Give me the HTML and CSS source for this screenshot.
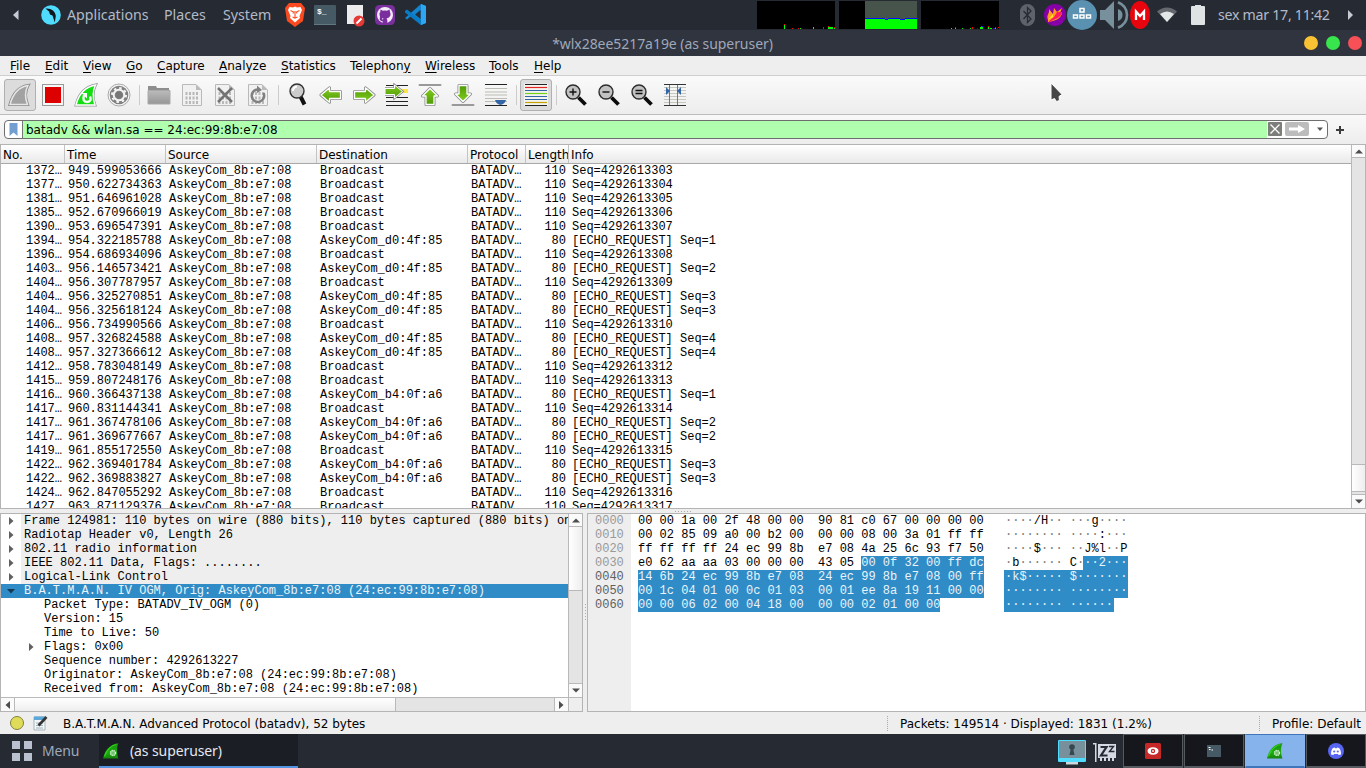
FILE: index.html
```html
<!DOCTYPE html>
<html lang="pt">
<head>
<meta charset="utf-8">
<title>*wlx28ee5217a19e (as superuser)</title>
<link rel="stylesheet" href="styles.css">
</head>
<body>
<svg width="0" height="0" class="defs">
  <defs>
    <linearGradient id="fin" x1="0" y1="0" x2="0" y2="1"><stop offset="0" stop-color="#1c8c10"/><stop offset=".6" stop-color="#1fae12"/><stop offset="1" stop-color="#15820c"/></linearGradient>
    <linearGradient id="grn" x1="0" y1="0" x2="0" y2="1"><stop offset="0" stop-color="#83cc1f"/><stop offset="1" stop-color="#4f9a06"/></linearGradient>
    <linearGradient id="fold" x1="0" y1="0" x2="0" y2="1"><stop offset="0" stop-color="#bbb"/><stop offset="1" stop-color="#969696"/></linearGradient>
    <symbol id="shark" viewBox="0 0 16 16"><path d="M0 15.500C2 7 7 1 15.500 .3C13.500 4 13.500 11 15.500 15.500Z" fill="url(#fin)"/><path d="M1.500 13.500C4 7 8 2.500 13.500 1.500" fill="none" stroke="#2fd21d" stroke-width="1.200"/><circle cx="10" cy="10" r="2.500" fill="#6fc26a" stroke="#e2f8e0" stroke-width="1.300" stroke-dasharray="1.300 .7"/></symbol>
    <symbol id="arrow" viewBox="0 0 24 24"><path d="M2 12L10.500 4.800V8.500H21.500V15.500H10.500V19.200Z" fill="#8b8b8b" stroke="#8b8b8b" stroke-width="3" stroke-linejoin="round"/><path d="M2 12L10.500 4.800V8.500H21.500V15.500H10.500V19.200Z" fill="url(#grn)" stroke="#fff" stroke-width="1.300" stroke-linejoin="round"/></symbol>
    <symbol id="varrow" viewBox="0 0 24 24"><path d="M12 5.500L19.500 13H16V21.500H8V13H4.500Z" fill="#8b8b8b" stroke="#8b8b8b" stroke-width="3" stroke-linejoin="round"/><path d="M12 5.500L19.500 13H16V21.500H8V13H4.500Z" fill="url(#grn)" stroke="#fff" stroke-width="1.300" stroke-linejoin="round"/></symbol>
    <symbol id="page" viewBox="0 0 24 24"><path d="M2.500 1.500H16L21.500 7V22.500H2.500Z" fill="#f1f1f1" stroke="#b9b9b9"/><path d="M16 1.500V7H21.500Z" fill="#bbb"/><path d="M5.500 10.500H19M5.500 15H19M5.500 19.500H19" stroke="#b8b8b8" stroke-width="3" stroke-dasharray="2 1.500"/></symbol>
    <symbol id="lens" viewBox="0 0 24 24"><path d="M14.500 14.500L21.500 21.500" stroke="#0b0b0b" stroke-width="3.800"/><circle cx="9" cy="9" r="7" fill="#c2c2c2" stroke="#2c2c2c" stroke-width="1.400"/></symbol>
  </defs>
</svg>

<header class="panel">
  <svg class="p-tri" width="6" height="10"><path d="M5.500 0V10L0 5Z" fill="#c5cad6"/></svg>
  <svg class="p-logo" width="20" height="20" viewBox="0 0 20 20"><circle cx="10" cy="10" r="9.800" fill="#4fdcff"/><path d="M4.500 3.500C10 3 14.500 6 14.800 11L13.800 17.500L11.500 10.500L9 9.500L8 6.500Z" fill="#10171c"/></svg>
  <span class="p-item p-app">Applications</span>
  <span class="p-item p-places">Places</span>
  <span class="p-item p-sys">System</span>
  <svg class="p-launch" width="142" height="24" viewBox="285 3 142 24">
    <path d="M289 3H301L305 8L303 21L295 27L287 21L285 8Z" fill="#fb4a1f"/><path d="M289.500 7L293 7.500L295 6.500L297 7.500L300.500 7L302 10L299.500 16L300 18L295 22.500L290 18L290.500 16L288 10Z" fill="#fff"/><path d="M290.500 10.500L293.500 12L293 13.500M299.500 10.500L296.500 12L297 13.500M295 11V18M292.500 17L295 18L297.500 17" stroke="#fb542b" stroke-width="1.200" fill="none"/>
    <rect x="314" y="5" width="22" height="20" rx="1" fill="#455a64"/><path d="M314 24.500H336" stroke="#607983"/><text x="317" y="14" class="mono-ico">$_</text>
    <path d="M347 5H363V24H347Z" fill="#ececec"/><circle cx="359" cy="21" r="5.500" fill="#e53935"/><path d="M356.500 23.500L361.500 18.500" stroke="#fff" stroke-width="2"/>
    <rect x="375" y="5" width="20" height="20" rx="4.500" fill="#7b2f9f"/><circle cx="385" cy="15" r="8" fill="#f3eaf7"/><path d="M380.500 9.500L383 10.700Q385 10.200 387 10.700L389.500 9.500L390 12Q391 13.500 390.300 15.800Q389.500 18 386.500 18.500L387.300 20V23.500H382.700V21.300Q380.500 21.500 379.700 19.500M382.700 20L383.500 18.500Q380.500 18 379.700 15.800Q379 13.500 380 12Z" fill="#7b2f9f"/>
    <path d="M421 4L426 6V23L421 25L411 16L407 19.500L405 18L417 7.500Z" fill="#1584cf"/><path d="M405 11L407 9.500L421 20.500V25L405 12.500Z" fill="#087bc4"/><path d="M420.500 10V19L415 14.500Z" fill="#262b33"/><path d="M421 4L426 6V23L421 25Z" fill="#2ea6f2"/>
  </svg>
  <svg class="p-graphs" width="242" height="28" viewBox="757 1 242 28" shape-rendering="crispEdges">
    <path d="M757 1H835V29H757ZM839 1H917V29H839ZM921 1H999V29H921Z" fill="#000"/>
    <path d="M865 1H917V19H865Z" fill="#46544b"/><path d="M865 19H917V29H865Z" fill="#0f0"/><path d="M865 18.500H885M885 19.500H888M888 18.500H900M900 19.500H905M905 18.500H917" stroke="#0010ff"/>
    <path d="M784 25h1v4h-1zM800 28h1v1h-1zM813 27h1v2h-1zM828 27h5v2h-5zM834 28h1v1h-1zM951 28h1v1h-1zM955 28h1v1h-1zM962 28h1v1h-1zM970 28h1v1h-1zM980 27h3v2h-3zM988 27h1v2h-1zM990 28h2v1h-2zM995 27h1v2h-1z" fill="#0f0"/>
    <path d="M784 24h1v1h-1zM792 28h1v1h-1zM798 28h1v1h-1zM823 27h1v2h-1zM828 26h1v1h-1zM834 27h1v1h-1zM955 27h1v1h-1zM972 27h1v2h-1zM981 26h2v1h-2zM988 26h1v1h-1zM995 27h1v1h-1zM998 27h1v1h-1z" fill="#f00"/>
    <path d="M977 28h1v1h-1zM982 26h1v1h-1zM987 28h1v1h-1zM993 28h2v1h-2zM997 28h1v1h-1z" fill="#20f"/>
  </svg>
  <svg class="p-tray" width="190" height="30" viewBox="1018 0 190 30">
    <rect x="1020" y="4" width="15" height="22" rx="7.500" fill="#5d626b"/><path d="M1023.500 11L1031 19L1027.500 22.500V7.500L1031 11L1023.500 19" fill="none" stroke="#272c34" stroke-width="1.300"/>
    <circle cx="1055" cy="15" r="11" fill="#8600a8"/><path d="M1048 20C1046 14 1050 14 1049 9L1053 14L1054 8L1057 12L1062 8L1060 13L1062 12C1062 18 1056 21 1048 22Z" fill="#ff9a1f"/><path d="M1049 21L1054 17L1057 12L1062 12C1061 18 1055 19 1049 22Z" fill="#ff1764"/><path d="M1048 20L1053 14L1053 17Z" fill="#ffe233"/>
    <circle cx="1082" cy="15" r="15" fill="#5a91b1"/><path d="M1080 8.500H1084V12H1080ZM1073.500 15H1077.500V18H1073.500ZM1080 15H1084V18H1080ZM1086.500 15H1090.500V18H1086.500Z" fill="none" stroke="#fff" stroke-width="1.500"/>
    <path d="M1100 10H1105L1114 1V29L1105 20H1100Z" fill="#78909c"/><path d="M1118 2.300Q1127 6 1127 15Q1127 24 1118 27.700" fill="none" stroke="#78909c" stroke-width="2.600"/><path d="M1118 9Q1122.500 10.500 1122.500 15Q1122.500 19.500 1118 21Z" fill="#78909c"/>
    <ellipse cx="1140" cy="15" rx="10" ry="14" fill="#e8050d"/><path d="M1136 20V11.500L1140 16L1144 11.500V20" fill="none" stroke="#fff" stroke-width="2.300"/>
    <path d="M1157 11.500Q1167 3.500 1177 11.500L1167 22Z" fill="#65696f"/><path d="M1160 14Q1167 9 1174 14L1167 22Z" fill="#e4e7e8"/>
    <path d="M1191 7Q1191 6 1192 6H1195V5H1201V6H1204Q1205 6 1205 7V24Q1205 25 1204 25H1192Q1191 25 1191 24Z" fill="#dfe3e4"/>
  </svg>
  <span class="p-item p-clock">sex mar 17, 11:42</span>
  <svg class="p-end" width="5" height="10"><path d="M0 0V10L5 5Z" fill="#c5cad6"/></svg>
</header>

<div class="titlebar">
  <span class="title">*wlx28ee5217a19e (as superuser)</span>
  <div class="lights"><i class="l-min"></i><i class="l-max"></i><i class="l-close"></i></div>
</div>

<nav class="menubar">
  <span class="w35"><u>F</u>ile</span><span class="w38"><u>E</u>dit</span><span class="w43"><u>V</u>iew</span><span class="w31"><u>G</u>o</span><span class="w62"><u>C</u>apture</span><span class="w62"><u>A</u>nalyze</span><span class="w69"><u>S</u>tatistics</span><span class="w75">Telephon<u>y</u></span><span class="w64"><u>W</u>ireless</span><span class="w45"><u>T</u>ools</span><span><u>H</u>elp</span>
</nav>

<div class="toolbar">
  <div class="tb on"><svg width="24" height="24"><path d="M2 21.500C5 10 11 4 20 2.500C17 8 17 15 19.500 21.500Z" fill="#9b9b9b" stroke="#888" stroke-width="3"/><path d="M2 21.500C5 10 11 4 20 2.500C17 8 17 15 19.500 21.500Z" fill="#a2a2a2" stroke="#e6e6e6" stroke-width="1.500"/></svg></div>
  <div class="tb"><svg width="24" height="24"><rect x="1.500" y="1.500" width="21" height="21" fill="#f6f6f6" stroke="#999"/><rect x="4" y="4" width="16" height="16" fill="#dc0000"/></svg></div>
  <div class="tb"><svg width="24" height="24"><path d="M2 22C5 10 11 4 21.500 2C18.500 8 18.500 15 21 22Z" fill="#12de11" stroke="#999" stroke-width="2.800"/><path d="M2 22C5 10 11 4 21.500 2C18.500 8 18.500 15 21 22Z" fill="#12de11" stroke="#fff" stroke-width="1.400"/><path d="M10 12Q8 19 13 19Q18 18.500 16 13.500" fill="none" stroke="#fff" stroke-width="2.400"/><path d="M7.500 10H13V15.500Z" fill="#fff"/></svg></div>
  <div class="tb"><svg width="24" height="24"><circle cx="12" cy="12" r="11" fill="#f5f5f5" stroke="#aaa"/><circle cx="12" cy="12" r="9.300" fill="#808080"/><circle cx="12" cy="12" r="5.300" fill="none" stroke="#f3f3f3" stroke-width="2"/><circle cx="12" cy="12" r="7" fill="none" stroke="#f3f3f3" stroke-width="2" stroke-dasharray="2.500 3"/><circle cx="12" cy="12" r="3.300" fill="#777"/></svg></div>
  <i class="sep"></i>
  <div class="tb"><svg width="24" height="24"><path d="M1 3H9L10 5H22V8H1Z" fill="#8e8e8e"/><path d="M1 7.500H23V21H1Z" fill="url(#fold)" stroke="#aaa"/></svg></div>
  <div class="tb"><svg width="24" height="24"><use href="#page"/></svg></div>
  <div class="tb"><svg width="24" height="24"><use href="#page"/><path d="M5 5L19 19M19 5L5 19" stroke="#737373" stroke-width="2.500"/></svg></div>
  <div class="tb"><svg width="24" height="24"><use href="#page"/><path d="M17.500 10A6.200 6.200 0 1 1 12 6.500" fill="none" stroke="#808080" stroke-width="2.500"/><path d="M11 2.500L16 7L11 10Z" fill="#808080"/></svg></div>
  <i class="sep"></i>
  <div class="tb"><svg width="24" height="24"><path d="M14.500 13.500L18.500 21.500" stroke="#111" stroke-width="4"/><circle cx="11" cy="8" r="7" fill="#ccc" stroke="#333" stroke-width="1.400"/><path d="M7 8Q7 4 11 3.500" stroke="#fff" stroke-width="2" fill="none"/></svg></div>
  <div class="tb"><svg width="24" height="24"><use href="#arrow"/></svg></div>
  <div class="tb"><svg width="24" height="24"><use href="#arrow" transform="rotate(180 12 12)"/></svg></div>
  <div class="tb"><svg width="24" height="24"><path d="M1 2.500H23M1 14.500H23M1 18.500H23M1 22.500H23" stroke="#222" stroke-width="1.200"/><path d="M15 6H23V10H15Z" fill="#ffe34b"/><path d="M0 5.500H9.500V2L17.500 8.500L9.500 15V11.500H0Z" fill="#8b8b8b" stroke="#8b8b8b" stroke-width="2.400"/><path d="M0 5.500H9.500V2L17.500 8.500L9.500 15V11.500H0Z" fill="url(#grn)" stroke="#fff" stroke-width="1"/></svg></div>
  <div class="tb"><svg width="24" height="24"><path d="M1.500 2H22.500" stroke="#999" stroke-width="2" stroke-linecap="round"/><use href="#varrow"/></svg></div>
  <div class="tb"><svg width="24" height="24"><path d="M1.500 22H22.500" stroke="#999" stroke-width="2" stroke-linecap="round"/><use href="#varrow" transform="rotate(180 12 12)"/></svg></div>
  <div class="tb"><svg width="24" height="24"><path d="M1 5.500H23M1 9H23M1 12H23M1 15.500H23M1 18.500H23" stroke="#bbbdb5"/><path d="M1 1.500H23M1 22.500H23" stroke="#222"/><path d="M11 17H22Q21 21 16.500 22Q12 21 11 17Z" fill="#3465a4"/></svg></div>
  <i class="sep"></i>
  <div class="tb on"><svg width="24" height="24"><path d="M0 .5H24V23H0Z" fill="#f3f3ef"/><path d="M1 1.500H23M1 22.500H23" stroke="#222"/><path d="M1 4.500H23" stroke="#e52222" stroke-width="1.200"/><path d="M1 7.500H23M1 13.500H23M1 16.500H23" stroke="#3465a4" stroke-width="1.200"/><path d="M1 10.500H23" stroke="#73d216" stroke-width="1.200"/><path d="M1 19.500H23" stroke="#c4a000" stroke-width="1.200"/></svg></div>
  <i class="sep"></i>
  <div class="tb"><svg width="24" height="24"><use href="#lens"/><path d="M5.500 9H12.500M9 5.500V12.500" stroke="#111" stroke-width="1.400"/></svg></div>
  <div class="tb"><svg width="24" height="24"><use href="#lens"/><path d="M5.500 9H12.500" stroke="#111" stroke-width="1.400"/></svg></div>
  <div class="tb"><svg width="24" height="24"><use href="#lens"/><path d="M5.500 7.500H12.500M5.500 10.500H12.500" stroke="#111" stroke-width="1.400"/></svg></div>
  <div class="tb"><svg width="24" height="24"><path d="M1 4.500H23M1 7.500H23M1 10.500H23M1 13.500H23M1 16.500H23M1 19.500H23" stroke="#c6c8c0"/><path d="M1 1.500H23M1 22.500H23" stroke="#333"/><path d="M6.500 2V22M14.500 2V22" stroke="#777"/><path d="M3 4L7 8L3 12ZM18 4L14 8L18 12Z" fill="#3465a4"/></svg></div>
</div>

<div class="filterbar">
  <div class="field">
    <div class="bm"><svg width="9" height="13"><path d="M.5 0H8.500V13L4.500 9.500L.5 13Z" fill="#729fcf"/></svg></div>
    <div class="expr">batadv &amp;&amp; wlan.sa == 24:ec:99:8b:e7:08</div>
    <div class="factions"><svg width="60" height="17"><rect x="1" y="1" width="14" height="14" rx="1" fill="#7b7e79"/><path d="M3.500 3.500L12.500 12.500M12.500 3.500L3.500 12.500" stroke="#fff" stroke-width="1.300"/><rect x="18" y="1" width="24" height="14" rx="2" fill="#bcbcbc"/><path d="M22 6.500H31V4L38 8L31 12V9.500H22Z" fill="#fff"/><path d="M50 6.500H56L53 10Z" fill="#555"/></svg></div>
  </div>
  <svg class="plus" width="8" height="8"><path d="M0 4H8M4 0V8" stroke="#3c3c3c" stroke-width="2"/></svg>
</div>

<section class="packets">
  <div class="ptable">
    <div class="phead"><span>No.</span><span>Time</span><span>Source</span><span>Destination</span><span>Protocol</span><span>Length</span><span>Info</span></div>
    <div class="pbody">
<div class="pr"><b>1372…</b><b>949.599053666</b><b>AskeyCom_8b:e7:08</b><b>Broadcast</b><b>BATADV…</b><b>110</b><b>Seq=4292613303</b></div>
<div class="pr"><b>1377…</b><b>950.622734363</b><b>AskeyCom_8b:e7:08</b><b>Broadcast</b><b>BATADV…</b><b>110</b><b>Seq=4292613304</b></div>
<div class="pr"><b>1381…</b><b>951.646961028</b><b>AskeyCom_8b:e7:08</b><b>Broadcast</b><b>BATADV…</b><b>110</b><b>Seq=4292613305</b></div>
<div class="pr"><b>1385…</b><b>952.670966019</b><b>AskeyCom_8b:e7:08</b><b>Broadcast</b><b>BATADV…</b><b>110</b><b>Seq=4292613306</b></div>
<div class="pr"><b>1390…</b><b>953.696547391</b><b>AskeyCom_8b:e7:08</b><b>Broadcast</b><b>BATADV…</b><b>110</b><b>Seq=4292613307</b></div>
<div class="pr"><b>1394…</b><b>954.322185788</b><b>AskeyCom_8b:e7:08</b><b>AskeyCom_d0:4f:85</b><b>BATADV…</b><b>80</b><b>[ECHO_REQUEST] Seq=1</b></div>
<div class="pr"><b>1396…</b><b>954.686934096</b><b>AskeyCom_8b:e7:08</b><b>Broadcast</b><b>BATADV…</b><b>110</b><b>Seq=4292613308</b></div>
<div class="pr"><b>1403…</b><b>956.146573421</b><b>AskeyCom_8b:e7:08</b><b>AskeyCom_d0:4f:85</b><b>BATADV…</b><b>80</b><b>[ECHO_REQUEST] Seq=2</b></div>
<div class="pr"><b>1404…</b><b>956.307787957</b><b>AskeyCom_8b:e7:08</b><b>Broadcast</b><b>BATADV…</b><b>110</b><b>Seq=4292613309</b></div>
<div class="pr"><b>1404…</b><b>956.325270851</b><b>AskeyCom_8b:e7:08</b><b>AskeyCom_d0:4f:85</b><b>BATADV…</b><b>80</b><b>[ECHO_REQUEST] Seq=3</b></div>
<div class="pr"><b>1404…</b><b>956.325618124</b><b>AskeyCom_8b:e7:08</b><b>AskeyCom_d0:4f:85</b><b>BATADV…</b><b>80</b><b>[ECHO_REQUEST] Seq=3</b></div>
<div class="pr"><b>1406…</b><b>956.734990566</b><b>AskeyCom_8b:e7:08</b><b>Broadcast</b><b>BATADV…</b><b>110</b><b>Seq=4292613310</b></div>
<div class="pr"><b>1408…</b><b>957.326824588</b><b>AskeyCom_8b:e7:08</b><b>AskeyCom_d0:4f:85</b><b>BATADV…</b><b>80</b><b>[ECHO_REQUEST] Seq=4</b></div>
<div class="pr"><b>1408…</b><b>957.327366612</b><b>AskeyCom_8b:e7:08</b><b>AskeyCom_d0:4f:85</b><b>BATADV…</b><b>80</b><b>[ECHO_REQUEST] Seq=4</b></div>
<div class="pr"><b>1412…</b><b>958.783048149</b><b>AskeyCom_8b:e7:08</b><b>Broadcast</b><b>BATADV…</b><b>110</b><b>Seq=4292613312</b></div>
<div class="pr"><b>1415…</b><b>959.807248176</b><b>AskeyCom_8b:e7:08</b><b>Broadcast</b><b>BATADV…</b><b>110</b><b>Seq=4292613313</b></div>
<div class="pr"><b>1416…</b><b>960.366437138</b><b>AskeyCom_8b:e7:08</b><b>AskeyCom_b4:0f:a6</b><b>BATADV…</b><b>80</b><b>[ECHO_REQUEST] Seq=1</b></div>
<div class="pr"><b>1417…</b><b>960.831144341</b><b>AskeyCom_8b:e7:08</b><b>Broadcast</b><b>BATADV…</b><b>110</b><b>Seq=4292613314</b></div>
<div class="pr"><b>1417…</b><b>961.367478106</b><b>AskeyCom_8b:e7:08</b><b>AskeyCom_b4:0f:a6</b><b>BATADV…</b><b>80</b><b>[ECHO_REQUEST] Seq=2</b></div>
<div class="pr"><b>1417…</b><b>961.369677667</b><b>AskeyCom_8b:e7:08</b><b>AskeyCom_b4:0f:a6</b><b>BATADV…</b><b>80</b><b>[ECHO_REQUEST] Seq=2</b></div>
<div class="pr"><b>1419…</b><b>961.855172550</b><b>AskeyCom_8b:e7:08</b><b>Broadcast</b><b>BATADV…</b><b>110</b><b>Seq=4292613315</b></div>
<div class="pr"><b>1422…</b><b>962.369401784</b><b>AskeyCom_8b:e7:08</b><b>AskeyCom_b4:0f:a6</b><b>BATADV…</b><b>80</b><b>[ECHO_REQUEST] Seq=3</b></div>
<div class="pr"><b>1422…</b><b>962.369883827</b><b>AskeyCom_8b:e7:08</b><b>AskeyCom_b4:0f:a6</b><b>BATADV…</b><b>80</b><b>[ECHO_REQUEST] Seq=3</b></div>
<div class="pr"><b>1424…</b><b>962.847055292</b><b>AskeyCom_8b:e7:08</b><b>Broadcast</b><b>BATADV…</b><b>110</b><b>Seq=4292613316</b></div>
<div class="pr"><b>1427…</b><b>963.871129376</b><b>AskeyCom_8b:e7:08</b><b>Broadcast</b><b>BATADV…</b><b>110</b><b>Seq=4292613317</b></div>
    </div>
  </div>
  <div class="vsb">
    <div class="sbtn up"><svg width="8" height="5"><path d="M0 4.500H8L4 .5Z" fill="#4d4d4d"/></svg></div>
    <div class="track"></div><div class="thumb pthumb"></div><div class="gap3"></div>
    <div class="sbtn dn"><svg width="8" height="5"><path d="M0 .5H8L4 4.500Z" fill="#4d4d4d"/></svg></div>
  </div>
</section>

<div class="hsplit"><i></i></div>

<div class="lower">
  <section class="tree">
    <div class="tmain">
      <div class="tbody">
        <div class="tr top"><svg width="5" height="8"><path d="M0 0L4.500 4L0 8Z"/></svg><span>Frame 124981: 110 bytes on wire (880 bits), 110 bytes captured (880 bits) on</span></div>
        <div class="tr top"><svg width="5" height="8"><path d="M0 0L4.500 4L0 8Z"/></svg><span>Radiotap Header v0, Length 26</span></div>
        <div class="tr top"><svg width="5" height="8"><path d="M0 0L4.500 4L0 8Z"/></svg><span>802.11 radio information</span></div>
        <div class="tr top"><svg width="5" height="8"><path d="M0 0L4.500 4L0 8Z"/></svg><span>IEEE 802.11 Data, Flags: ........</span></div>
        <div class="tr top"><svg width="5" height="8"><path d="M0 0L4.500 4L0 8Z"/></svg><span>Logical-Link Control</span></div>
        <div class="tr sel"><svg width="8" height="5"><path d="M0 0H8L4 4.500Z"/></svg><span>B.A.T.M.A.N. IV OGM, Orig: AskeyCom_8b:e7:08 (24:ec:99:8b:e7:08)</span></div>
        <div class="tr kid">Packet Type: BATADV_IV_OGM (0)</div>
        <div class="tr kid">Version: 15</div>
        <div class="tr kid">Time to Live: 50</div>
        <div class="tr kidx"><svg width="5" height="8"><path d="M0 0L4.500 4L0 8Z"/></svg><span>Flags: 0x00</span></div>
        <div class="tr kid">Sequence number: 4292613227</div>
        <div class="tr kid">Originator: AskeyCom_8b:e7:08 (24:ec:99:8b:e7:08)</div>
        <div class="tr kid">Received from: AskeyCom_8b:e7:08 (24:ec:99:8b:e7:08)</div>
      </div>
      <div class="vsb">
        <div class="sbtn up"><svg width="8" height="5"><path d="M0 4.500H8L4 .5Z" fill="#4d4d4d"/></svg></div>
        <div class="thumb tthumb"></div><div class="track"></div>
        <div class="sbtn dn"><svg width="8" height="5"><path d="M0 .5H8L4 4.500Z" fill="#4d4d4d"/></svg></div>
      </div>
    </div>
    <div class="hsb">
      <div class="hbtn"><svg width="5" height="8"><path d="M5 0V8L.5 4Z" fill="#4d4d4d"/></svg></div>
      <div class="hthumb"></div><div class="htrack"></div>
      <div class="hbtn"><svg width="5" height="8"><path d="M0 0V8L4.500 4Z" fill="#4d4d4d"/></svg></div>
      <div class="corner"></div>
    </div>
  </section>
  <div class="vsplit"><i></i></div>
  <section class="hex">
    <pre class="off">0000
0010
0020
0030
<em>0040
0050
0060</em></pre>
    <pre class="bytes">00 00 1a 00 2f 48 00 00  90 81 c0 67 00 00 00 00
00 02 85 09 a0 00 b2 00  00 00 08 00 3a 01 ff ff
ff ff ff ff 24 ec 99 8b  e7 08 4a 25 6c 93 f7 50
e0 62 aa aa 03 00 00 00  43 05 <mark>00 0f 32 00 ff dc</mark>
<mark>14 6b 24 ec 99 8b e7 08  24 ec 99 8b e7 08 00 ff</mark>
<mark>00 1c 04 01 00 0c 01 03  00 01 ee 8a 19 11 00 00</mark>
<mark>00 00 06 02 00 04 18 00  00 00 02 01 00 00</mark></pre>
    <pre class="ascii">····<s>/H</s>·· ···<s>g</s>····
········ ····<s>:</s>···
····<s>$</s>··· ··<s>J%l</s>··<s>P</s>
·<s>b</s>······ <s>C</s>·<mark>··2···</mark>
<mark>·k$····· $·······</mark>
<mark>········ ········</mark>
<mark>········ ······</mark></pre>
  </section>
</div>

<footer class="status">
  <i class="led"></i>
  <svg class="note" width="16" height="16"><path d="M1 2H12V15H1Z" fill="#f4f7f9" stroke="#a6b5bd"/><path d="M1 1.500H12V5H1Z" fill="#5aa7d8"/><path d="M3 8H10M3 10.500H10M3 13H10" stroke="#9fb0b8"/><path d="M5.500 10.500L13.500 2" stroke="#333" stroke-width="2.600"/></svg>
  <span class="s-msg">B.A.T.M.A.N. Advanced Protocol (batadv), 52 bytes</span>
  <span class="s-pk">Packets: 149514 · Displayed: 1831 (1.2%)</span>
  <span class="s-pf">Profile: Default</span>
</footer>

<footer class="taskbar">
  <svg class="grid4" width="20" height="20"><path d="M0 0H8V8H0ZM12 0H20V8H12ZM0 12H8V20H0ZM12 12H20V20H12Z" fill="#b9c0d0"/></svg>
  <span class="menu">Menu</span>
  <div class="task"><svg width="16" height="16"><use href="#shark"/></svg><span>(as superuser)</span></div>
  <div class="tleft">
    <svg width="28" height="25"><rect width="28" height="22" rx="1" fill="#4fdcff"/><rect x="1" y="1" width="26" height="17" fill="#78909c"/><path d="M8 22H20V24.500H8Z" fill="#cfd8dc"/><circle cx="14" cy="7" r="2.800" fill="#37474f"/><path d="M13 8H15L16.500 15H11.500Z" fill="#37474f"/></svg>
    <svg width="23" height="21"><path d="M0 1H3.500V20H2V2.500H0Z" fill="#d5d9e4"/><path d="M5 2H23V16H21V19H19V16H17V19H15V16H13V19H11V16H9V19H7V16H5Z" fill="#d5d9e4"/><path d="M7.500 5H13.500L8 13.500H14.500" fill="none" stroke="#262b33" stroke-width="2.200"/><path d="M16 4.500H20.500L16.500 9.500H21.500" fill="none" stroke="#262b33" stroke-width="1.400"/></svg>
  </div>
  <div class="wb"><svg width="16" height="16"><rect width="16" height="16" rx="1.500" fill="#c62828"/><ellipse cx="8" cy="8" rx="5.500" ry="3.800" fill="#fff"/><circle cx="8" cy="8" r="2.200" fill="#c62828"/><circle cx="8" cy="8" r=".9" fill="#fff"/></svg></div>
  <div class="wb"><svg width="14" height="12"><rect width="14" height="12" fill="#455a64"/><path d="M1.500 2.500H3.500M2 4.500H3.500M4.500 5H6" stroke="#fff"/></svg></div>
  <div class="wb act"><svg width="16" height="16"><use href="#shark"/></svg></div>
  <div class="wb"><svg width="16" height="16"><circle cx="8" cy="8" r="8" fill="#5865f2"/><path d="M3 11.500Q3 6.500 5 5L6.800 4.500L7.200 5.300H8.800L9.200 4.500L11 5Q13 6.500 13 11.500L10.500 12L10 11H6L5.500 12Z" fill="#fff"/><circle cx="6.200" cy="8.500" r="1.100" fill="#5865f2"/><circle cx="9.800" cy="8.500" r="1.100" fill="#5865f2"/></svg></div>
</footer>

<svg class="cursor" width="14" height="22" viewBox="0 0 14 22"><path d="M1 1V18L4.500 16.500L6.500 19.500L9.500 18.500L9 14.500L12 12.500Z" fill="#464646" stroke="#fff" stroke-width="1"/></svg>
</body>
</html>
```
FILE: styles.css
```css
* { box-sizing: border-box; }
body { margin: 0; width: 1366px; height: 768px; overflow: hidden; background: #eee; color: #000; font: 12px/16px "DejaVu Sans", sans-serif; display: flex; flex-direction: column; position: relative; }
svg { display: block; flex: none; }
.defs { position: absolute; }
i { display: block; }

.panel { height: 30px; background: #262b33; display: flex; align-items: center; color: #b3bac8; font: 14.2px/20px "Noto Sans", sans-serif; flex: none; }
.p-tri { margin: 0 23px 0 13px; }
.p-logo { margin: 0 6px 0 -1px; }
.p-item { white-space: nowrap; flex: none; }
.p-app { width: 97px; }
.p-places { width: 59px; }
.p-sys { width: 62px; }
.p-launch { margin-right: 330px; }
.p-graphs { margin-right: 19px; }
.p-tray { margin-right: 10px; }
.p-clock { width: 130px; letter-spacing: -.28px; }
.mono-ico { font: bold 8px "Liberation Mono", monospace; fill: #fff; }

.titlebar { height: 26px; background: #30343f; display: grid; grid-template-columns: 1fr; align-items: center; font: 14px/20px "Noto Sans", sans-serif; color: #9fa8b9; position: relative; flex: none; }
.title { text-align: center; padding: 1px 41px 0 0; letter-spacing: -.05px; }
.lights { position: absolute; right: 4px; top: 6px; display: flex; gap: 8px; }
.lights i { width: 14px; height: 14px; border-radius: 50%; }
.l-min { background: #fbc333; }
.l-max { background: #38e54d; }
.l-close { background: #f75057; }

.menubar { height: 20px; flex: none; display: flex; align-items: center; padding-left: 10px; border-bottom: 1px solid #cfcfcf; background: #eee; white-space: nowrap; }
.menubar span { flex: none; }
.menubar u { text-underline-offset: 2px; text-decoration-thickness: 1px; }
.w31 { width: 31px; } .w35 { width: 35px; } .w38 { width: 38px; } .w43 { width: 43px; } .w45 { width: 45px; }
.w62 { width: 62px; } .w64 { width: 64px; } .w69 { width: 69px; } .w75 { width: 75px; }

.toolbar { height: 39px; flex: none; display: flex; align-items: center; padding: 0 0 1px 4px; border-bottom: 1px solid #bcbcbc; background: linear-gradient(#fafafa, #ededed); }
.tb { width: 32px; height: 32px; margin-right: 1px; display: grid; place-items: center; border: 1px solid transparent; border-radius: 3px; flex: none; }
.tb.on { background: #dcdcdc; border-color: #b0b0b0; }
.sep { width: 1px; height: 20px; background: #ccc; margin: 0 3px; flex: none; }

.filterbar { height: 29px; flex: none; display: flex; align-items: center; background: linear-gradient(#f9f9f9, #ededed); padding: 0 0 0 4px; }
.field { width: 1324px; height: 19px; border: 1px solid #6e6e6e; border-radius: 4px; background: #fff; display: flex; overflow: hidden; }
.bm { width: 18px; border-right: 1px solid #777; display: grid; place-items: center; flex: none; }
.expr { flex: 1; background: #afffaf; padding-left: 3px; line-height: 19px; }
.factions { width: 60px; flex: none; }
.plus { margin-left: 8px; }

.packets { height: 365px; flex: none; display: flex; border: 1px solid #b4b4b4; background: #fff; }
.ptable { flex: 1; min-width: 0; display: flex; flex-direction: column; }
.phead { height: 19px; flex: none; display: grid; grid-template-columns: 64px 101px 151px 151px 58px 43px 1fr; background: linear-gradient(#fff, #e9e9e9); border-bottom: 1px solid #a9a9a9; line-height: 21px; }
.phead span { height: 18px; padding-left: 2px; border-right: 1px solid #c3c3c3; overflow: hidden; }
.phead span:last-child { border: 0; }
.pbody { height: 344px; overflow: hidden; font: 12px/14px "Liberation Mono", monospace; }
.pr { height: 14px; display: grid; grid-template-columns: 61px 106px 151px 151px 56px 40px 1fr; line-height: 15px; }
.pr b { font-weight: normal; white-space: pre; }
.pr b:first-child, .pr b:nth-child(6) { text-align: right; }
.pr b:nth-child(2) { padding-left: 6px; }
.pr b:nth-child(3) { padding-left: 1px; }
.pr b:nth-child(4), .pr b:nth-child(5) { padding-left: 1px; }
.pr b:nth-child(7) { padding-left: 6px; }

.vsb { width: 13px; flex: none; display: flex; flex-direction: column; box-shadow: -1px 0 #b9b9b9; background: #e4e4e4; }
.sbtn { height: 13px; display: grid; place-items: center; background: #fafafa; flex: none; }
.up { border-bottom: 1px solid #b9b9b9; }
.dn { height: 14px; border-top: 1px solid #b9b9b9; }
.track { flex: 1; }
.thumb { background: linear-gradient(90deg, #fff, #eee); border: solid #b9b9b9; border-width: 1px 0; flex: none; }
.pthumb { height: 28px; }
.gap3 { height: 2px; }

.hsplit { height: 4px; flex: none; display: flex; justify-content: center; align-items: center; }
.hsplit i { width: 17px; height: 1px; background: repeating-linear-gradient(90deg, #aaa 0 1px, transparent 1px 3px); }

.lower { height: 199px; flex: none; display: flex; }
.tree { width: 583px; border: 1px solid #b4b4b4; background: #fff; display: flex; flex-direction: column; flex: none; }
.tmain { height: 183px; display: flex; }
.tbody { flex: 1; min-width: 0; overflow: hidden; font: 12px/14px "Liberation Mono", monospace; padding-right: 1px; }
.tr { height: 14px; display: flex; line-height: 13px; white-space: pre; align-items: center; }
.tr svg { fill: #606060; }
.top svg { margin: 0 7px 0 8px; }
.top span { background: #eee; flex: 1; padding-left: 3px; height: 14px; line-height: 15px; overflow: hidden; }
.sel { background: #308cc6; color: #e9f3fa; }
.sel svg { margin: 0 9px 0 6px; fill: #123a55; }
.kid { padding-left: 43px; }
.kidx svg { margin: 0 10px 0 28px; }
.tthumb { height: 64px; border-top: 0; }
.hsb { height: 14px; border-top: 1px solid #b9b9b9; display: flex; background: #e4e4e4; }
.hbtn { width: 14px; background: #fafafa; display: grid; place-items: center; border: solid #b9b9b9; border-width: 0 1px 0 0; }
.hthumb { width: 381px; background: linear-gradient(#fff, #eee); border-right: 1px solid #b9b9b9; }
.htrack { flex: 1; border-right: 1px solid #b9b9b9; }
.corner { width: 13px; background: #eee; }
.vsplit { width: 4px; display: flex; align-items: center; justify-content: center; }
.vsplit i { width: 1px; height: 17px; background: repeating-linear-gradient(#aaa 0 1px, transparent 1px 3px); }
.hex { flex: 1; border: 1px solid #b4b4b4; background: #fff; display: flex; font: 12px/14px "Liberation Mono", monospace; }
.hex pre { margin: 0; font: inherit; }
.off { width: 43px; background: #eee; color: #999; padding: 0 0 0 7px; flex: none; }
.off em { font-style: normal; color: #606060; }
.bytes { padding: 0 0 0 7px; width: 374px; flex: none; }
mark { background: #308cc6; color: #e9f3fa; display: inline-block; height: 14px; vertical-align: top; }
.ascii { color: #777; }
.ascii s { text-decoration: none; color: #000; }
.ascii mark { box-shadow: -1px 0 #308cc6, 1px 0 #308cc6; }

.status { height: 22px; flex: none; display: flex; align-items: center; }
.led { width: 14px; height: 14px; margin: 0 16px 0 10px; border-radius: 50%; background: #dfdc5a; border: 1px solid #83813c; flex: none; }
.note { margin: 0 14px 0 -7px; }
.s-msg { width: 824px; padding-top: 1px; }
.s-pk { width: 372px; padding: 1px 0 0 12px; border-left: 1px dotted #aaa; line-height: 14px; }
.s-pf { padding: 1px 0 0 12px; border-left: 1px dotted #aaa; line-height: 14px; white-space: nowrap; }

.taskbar { height: 34px; flex: none; background: #262b33; display: flex; align-items: center; font: 14px/20px "Noto Sans", sans-serif; color: #9fa8ba; }
.grid4 { margin: 0 10px 0 12px; }
.menu { width: 57px; letter-spacing: -.2px; }
.task { width: 199px; height: 34px; background: #1b1e25; border-bottom: 2px solid #5294e2; display: flex; align-items: center; padding: 2px 0 0 4px; gap: 11px; color: #e4e8f0; letter-spacing: -.1px; }
.tleft { flex: 1; display: flex; justify-content: flex-end; align-items: center; gap: 7px; padding: 3px 6px 0 0; }
.wb { width: 60px; height: 34px; margin-left: 1px; background: #15171c; border: 1px solid #555960; border-bottom-width: 2px; display: grid; place-items: center; flex: none; }
.act { background: #87b3ec; border-color: #3f75bb #87b3ec; }

/* pointer floats above the toolbar */
.cursor { position: absolute; left: 1050px; top: 82px; }
```
